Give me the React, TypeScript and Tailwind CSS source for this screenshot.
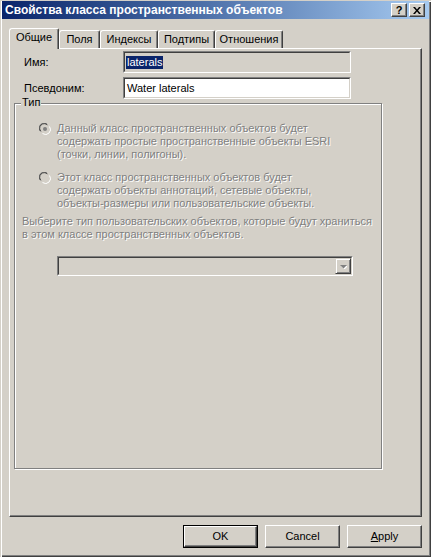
import React from "react";

const dim = "text-[#808080] [text-shadow:1px_1px_0_#fff]";

function TitleButton({ children, className = "" }: { children: React.ReactNode; className?: string }) {
  return (
    <div className={`w-[16px] h-[14px] bg-[#d4d0c8] border-t border-l border-white border-r border-b border-r-[#404040] border-b-[#404040] shadow-[inset_-1px_-1px_0_#808080] flex items-center justify-center ${className}`}>
      {children}
    </div>
  );
}

function Tab({ label, active = false, w }: { label: string; active?: boolean; w: string }) {
  return (
    <div
      className={`${w} ${active ? "h-[21px] -mb-px pt-[2px]" : "h-[18px] pt-[2px]"} bg-[#d4d0c8] border-t border-l border-white border-r border-r-[#404040] shadow-[inset_-1px_0_0_#808080] rounded-tl-[3px] rounded-tr-[2px] flex justify-center`}
    >
      <span className="leading-[13px]">{label}</span>
    </div>
  );
}

function Sunken({ className = "", children }: { className?: string; children?: React.ReactNode }) {
  return (
    <div className={`border-t border-l border-[#808080] border-r border-b border-r-white border-b-white ${className}`}>
      <div className="w-full h-full border-t border-l border-[#404040] border-r border-b border-r-[#d4d0c8] border-b-[#d4d0c8] flex items-center">
        {children}
      </div>
    </div>
  );
}

function Radio({ checked = false }: { checked?: boolean }) {
  return (
    <svg width="12" height="12" viewBox="0 0 12 12" className="shrink-0">
      <path d="M1 8 A5 5 0 0 1 8 1" stroke="#808080" fill="none" />
      <path d="M2 8.5 A4 4 0 0 1 8.5 2" stroke="#404040" fill="none" />
      <circle cx="6" cy="6" r="4" fill="#d4d0c8" />
      <path d="M3.5 10.5 A5 5 0 0 0 10.5 3.5" stroke="#ffffff" fill="none" />
      {checked && <circle cx="6" cy="6" r="2" fill="#808080" />}
    </svg>
  );
}

function Button({ children, isDefault = false }: { children: React.ReactNode; isDefault?: boolean }) {
  return (
    <div className={`w-[75px] h-[23px] ${isDefault ? "border border-black" : ""}`}>
      <div className="w-full h-full bg-[#d4d0c8] border-t border-l border-white border-r border-b border-r-[#404040] border-b-[#404040] shadow-[inset_-1px_-1px_0_#808080] flex items-center justify-center">
        {children}
      </div>
    </div>
  );
}

export default function App() {
  return (
    <div className="w-[431px] h-[557px] bg-[#d4d0c8] flex flex-col pt-px px-[2px] pb-[2px] text-[11px] text-black font-['Liberation_Sans',Arial,sans-serif] shadow-[inset_1px_1px_0_#d4d0c8,inset_2px_2px_0_#fff,inset_-1px_-1px_0_#404040,inset_-2px_-2px_0_#808080] overflow-hidden">
      {/* title bar */}
      <div className="h-[18px] flex items-center bg-linear-to-r from-[#0a246a] to-[#a6caf0] pl-[3px] pr-[4px]">
        <span className="flex-1 text-white font-bold text-[12px] leading-none">Свойства класса пространственных объектов</span>
        <TitleButton>
          <span className="font-bold text-[11px] leading-none mt-px">?</span>
        </TitleButton>
        <TitleButton className="ml-[2px]">
          <svg width="8" height="7" viewBox="0 0 8 7">
            <path d="M0 0h2l2 2.5L6 0h2L5 3.5 8 7H6L4 4.5 2 7H0l3-3.5z" fill="#000" />
          </svg>
        </TitleButton>
      </div>

      <div className="flex-1 flex flex-col px-[7px] pt-[9px]">
        {/* tabs */}
        <div className="h-[20px] flex items-end relative z-10">
          <Tab label="Общие" active w="w-[50px]" />
          <Tab label="Поля" w="w-[41px]" />
          <Tab label="Индексы" w="w-[58px]" />
          <Tab label="Подтипы" w="w-[57px]" />
          <Tab label="Отношения" w="w-[68px]" />
        </div>

        {/* panel */}
        <div className="h-[469px] border-t border-l border-white border-r border-b border-r-[#404040] border-b-[#404040] shadow-[inset_-1px_-1px_0_#808080] flex flex-col">
          <div className="flex items-center mt-[2px] pl-[14px]">
            <span className="w-[99px]">Имя:</span>
            <Sunken className="w-[228px] h-[22px] bg-[#d4d0c8]">
              <span className="ml-[1px] bg-[#0a246a] text-white px-px leading-[13px]">laterals</span>
            </Sunken>
          </div>
          <div className="flex items-center mt-[4px] pl-[14px]">
            <span className="w-[99px]">Псевдоним:</span>
            <Sunken className="w-[228px] h-[22px] bg-white">
              <span className="ml-[2px] leading-[13px]">Water laterals</span>
            </Sunken>
          </div>

          {/* group box */}
          <div className="relative ml-[4px] mt-[4px] w-[368px] h-[366px] border border-[#808080] shadow-[inset_1px_1px_0_#fff,1px_1px_0_#fff] flex flex-col">
            <span className="absolute -top-[8px] left-[6px] px-[1px] bg-[#d4d0c8] leading-[13px]">Тип</span>

            <div className="flex mt-[18px] pl-[24px]">
              <div className="pt-px"><Radio checked /></div>
              <p className={`ml-[6px] leading-[13px] ${dim}`}>
                Данный класс пространственных объектов будет<br />
                содержать простые пространственные объекты ESRI<br />
                (точки, линии, полигоны).
              </p>
            </div>

            <div className="flex mt-[10px] pl-[24px]">
              <div className="pt-px"><Radio /></div>
              <p className={`ml-[6px] leading-[13px] ${dim}`}>
                Этот класс пространственных объектов будет<br />
                содержать объекты аннотаций, сетевые объекты,<br />
                объекты-размеры или пользовательские объекты.
              </p>
            </div>

            <p className={`mt-[5px] pl-[7px] leading-[13px] ${dim}`}>
              Выберите тип пользовательских объектов, которые будут храниться<br />
              в этом классе пространственных объектов.
            </p>

            <Sunken className="ml-[42px] mt-[15px] w-[296px] h-[20px] bg-[#d4d0c8]">
              <div className="ml-auto w-[16px] h-[16px] border-t border-l border-[#d4d0c8] border-r border-b border-r-[#404040] border-b-[#404040] shadow-[inset_1px_1px_0_#fff,inset_-1px_-1px_0_#808080] flex items-center justify-center">
                <svg width="7" height="5" viewBox="0 0 7 5">
                  <path d="M1 2h7L4.5 5.5z" fill="#fff" />
                  <path d="M0 1h7L3.5 4.5z" fill="#808080" />
                </svg>
              </div>
            </Sunken>
          </div>
        </div>

        {/* buttons */}
        <div className="mt-[8px] flex justify-end gap-[7px]">
          <Button isDefault>OK</Button>
          <Button>Cancel</Button>
          <Button>
            <span><span className="underline">A</span>pply</span>
          </Button>
        </div>
      </div>
    </div>
  );
}
